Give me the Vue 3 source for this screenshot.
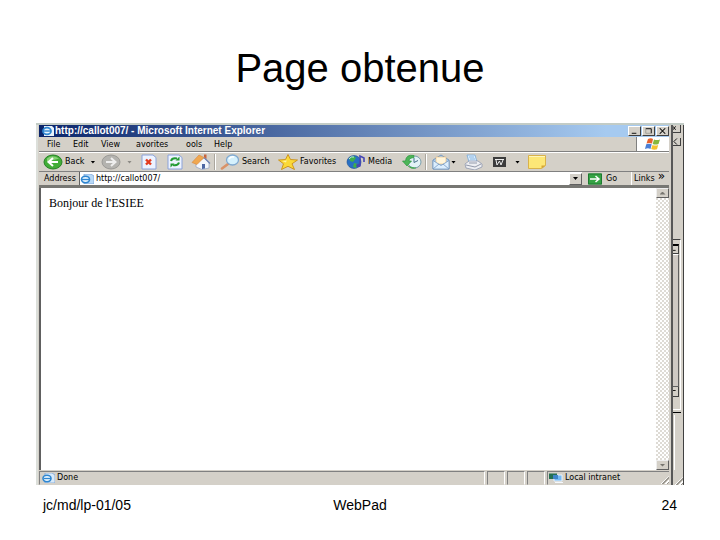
<script setup>
import { ref } from 'vue'

const menus = [
  { name: 'file', label: 'File' },
  { name: 'edit', label: 'Edit' },
  { name: 'view', label: 'View' },
  { name: 'favorites', label: 'avorites' },
  { name: 'tools', label: 'ools' },
  { name: 'help', label: 'Help' },
]

const address = ref('http://callot007/')
</script>

<template>
  <main class="slide">
    <h1>Page obtenue</h1>

    <div class="desktop">
      <section class="window">
        <header class="titlebar">
          <svg class="page-icon" viewBox="0 0 14 10">
            <path d="M3 0h8l2 2v8H3z" fill="#e8f3fc" />
            <ellipse cx="6" cy="5" rx="4" ry="3.4" fill="none" stroke="#2f86d0" stroke-width="1.8" />
            <path d="M3 5h7" stroke="#2f86d0" stroke-width="1.4" />
          </svg>
          <span class="title">http://callot007/ - Microsoft Internet Explorer</span>
          <div class="controls">
            <button aria-label="Minimize"><svg viewBox="0 0 12 8"><path d="M3 6.5h5" stroke="#000" /></svg></button>
            <button aria-label="Restore"><svg viewBox="0 0 12 8"><path d="M3 1.5h6v5" fill="none" stroke="#000" /><path d="M3 1.500v5h6" fill="none" stroke="#8b8984" stroke-width=".7" /></svg></button>
            <button aria-label="Close"><svg viewBox="0 0 12 8"><path d="M3 1l6 6M9 1L3 7" stroke="#000" stroke-width="1.1" /></svg></button>
          </div>
        </header>

        <nav class="menubar">
          <button v-for="m in menus" :key="m.name" :class="['menu', m.name]">{{ m.label }}</button>
          <div class="throbber">
            <svg viewBox="0 0 18 12">
              <path d="M4 1q3-1.4 5 0L8 5.500Q5 4.300 2.500 5.500z" fill="#e8622c" />
              <path d="M10 1.500q3 1.200 6 0L14.500 6q-3 1.200-5.800 0z" fill="#86b83c" />
              <path d="M2.200 6.300q3-1.200 5.500 0L6.500 11Q4 9.700 1 11z" fill="#4b7fd6" />
              <path d="M8.500 7q3 1.200 5.700 0L13 11.300q-3 1-5.800-.3z" fill="#f5c22d" />
            </svg>
          </div>
        </nav>

        <div class="toolbar">
          <button class="tool back">
            <svg viewBox="0 0 20 16">
              <ellipse cx="10" cy="8" rx="9" ry="7" fill="#42ad38" stroke="#258324" />
              <path d="M4 4.500Q9 0 16 4.500 10 6 4 8z" fill="#a5df91" opacity=".7" />
              <path d="M15 8H6M10 4L5.500 8l4.500 4" fill="none" stroke="#fff" stroke-width="2" />
            </svg>
            <span>Back</span><i class="caret"></i>
          </button>
          <button class="tool forward" aria-label="Forward">
            <svg viewBox="0 0 20 16">
              <ellipse cx="10" cy="8" rx="9" ry="7" fill="#b4b3af" stroke="#9a9996" />
              <path d="M5 8h9M10 4l4.500 4-4.500 4" fill="none" stroke="#eee" stroke-width="2" />
            </svg>
            <i class="caret dim"></i>
          </button>
          <button class="tool stop" aria-label="Stop">
            <svg viewBox="0 0 20 16">
              <path d="M3 1h11l3 2.500V15H3z" fill="#edf3ff" stroke="#8ba2d9" />
              <path d="M7 5.500l5 5M12 5.500l-5 5" stroke="#e33a1e" stroke-width="2.400" />
            </svg>
          </button>
          <button class="tool refresh" aria-label="Refresh">
            <svg viewBox="0 0 20 16">
              <path d="M3 1h11l3 2.500V15H3z" fill="#edf3ff" stroke="#8ba2d9" />
              <path d="M6 7q1-3.500 6-2.500M14 8.500q-1 3.500-6 2.500" fill="none" stroke="#229a32" stroke-width="2" />
              <path d="M10.500 6.500h4V2.500zM9.500 9.500h-4v4z" fill="#229a32" />
            </svg>
          </button>
          <button class="tool home" aria-label="Home">
            <svg viewBox="0 0 20 16">
              <path d="M5 9l8-5 5 5v5l-7 1.500L5 13z" fill="#f4f7fc" stroke="#8fa0c4" stroke-width=".7" />
              <path d="M1 8.500L8 1l5 2.500L6 10.500z" fill="#f0a850" stroke="#d8873c" stroke-width=".6" />
              <path d="M13 3.500l6 6" stroke="#7084b4" stroke-width="1.200" />
              <path d="M11 10h3v4.500l-3 .5z" fill="#4d67a3" />
              <path d="M13 .5h2.500V5L13 3z" fill="#c8653d" />
            </svg>
          </button>
          <i class="divider"></i>
          <button class="tool search">
            <svg viewBox="0 0 20 16">
              <path d="M8 10l-6 4.500" stroke="#d99267" stroke-width="2.600" stroke-linecap="round" />
              <ellipse cx="12.500" cy="6" rx="6" ry="5" fill="#d5f1fd" stroke="#80a9d0" stroke-width="1.300" />
              <path d="M9 5q2-3 5-2" fill="none" stroke="#fff" stroke-width="1.400" />
            </svg>
            <span>Search</span>
          </button>
          <button class="tool star">
            <svg viewBox="0 0 20 16">
              <path d="M10 .5l2.500 5 7 .5-5.500 3.800 2.500 5.700L10 12.300 3.500 15.500l2-5.700L.5 6l7-.5z" fill="#fbd936" stroke="#c98f18" stroke-width=".9" />
              <path d="M10 2.500L8.500 6.500 4 7l4 1.500z" fill="#fff4a2" />
            </svg>
            <span>Favorites</span>
          </button>
          <button class="tool media">
            <svg viewBox="0 0 20 16">
              <ellipse cx="8" cy="8" rx="7" ry="6.500" fill="#286fc4" stroke="#174e90" stroke-width=".6" />
              <path d="M3 4q5-3.500 7 0L7 8 4 7zM8 9l4 1-2 4-3-1z" fill="#3fae4c" />
              <path d="M3 5q2-3 5-2" stroke="#bdeee0" fill="none" />
              <path d="M14 11V2l4 2v4" fill="none" stroke="#4747b4" stroke-width="1.600" />
              <ellipse cx="12.500" cy="11.500" rx="2.400" ry="1.800" fill="#4747b4" />
            </svg>
            <span>Media</span>
          </button>
          <button class="tool history" aria-label="History">
            <svg viewBox="0 0 20 16">
              <ellipse cx="12.500" cy="8" rx="6.500" ry="6" fill="#e2f2f7" stroke="#7b9fae" />
              <path d="M12 4v4.500l4-2" fill="none" stroke="#46708b" />
              <path d="M12 1.500Q4 0 3.500 7H.5L5 12l4.500-5H7q0-3 5-3.500zM6 12q3 3.500 8 2" fill="#4db558" stroke="#2d9641" stroke-width=".7" />
            </svg>
          </button>
          <i class="divider"></i>
          <button class="tool mail" aria-label="Mail">
            <svg viewBox="0 0 20 16">
              <path d="M2 6l8-5 8 5v9H2z" fill="#a9cdf0" stroke="#7799c0" />
              <path d="M5 3h10v7H5z" fill="#fff5db" stroke="#e5b777" stroke-width=".6" />
              <path d="M2 6.500l8 5 8-5V15H2z" fill="#dceefe" stroke="#7799c0" stroke-width=".8" />
              <path d="M2 15l6-5M18 15l-6-5" stroke="#7799c0" stroke-width=".8" />
            </svg>
            <i class="caret"></i>
          </button>
          <button class="tool print" aria-label="Print">
            <svg viewBox="0 0 20 16">
              <path d="M4 1h8l2 7H6z" fill="#d9edff" stroke="#79a8d6" stroke-width=".8" />
              <path d="M2 10l4-3h9l4 3v3l-7 3-9-2z" fill="#edeef2" stroke="#8f98ad" stroke-width=".8" />
              <path d="M6 3h5M7 5h5" stroke="#79a8d6" stroke-width=".8" />
              <path d="M3 11l9 2 6-3M6 9h8" fill="none" stroke="#9299aa" />
            </svg>
          </button>
          <button class="tool editor" aria-label="Edit">
            <svg viewBox="0 0 20 16">
              <path d="M4 3h13v10H4z" fill="#3c3c3c" />
              <path d="M6 5.500h9M7 6l1 5 2.500-4 1.500 4 2-5" fill="none" stroke="#eee" />
            </svg>
            <i class="caret"></i>
          </button>
          <button class="tool" aria-label="Discuss">
            <svg viewBox="0 0 20 16">
              <path d="M1.500 1.500h17v10l-4 3h-13z" fill="#fde777" stroke="#d9b24a" />
              <path d="M18.500 11.500h-4v3z" fill="#d5a536" />
              <path d="M2 2.500h16" stroke="#fff6bb" />
            </svg>
          </button>
        </div>

        <form class="addressbar" @submit.prevent>
          <label for="address">Address</label>
          <div class="combo">
            <svg class="page-icon" viewBox="0 0 14 10">
              <path d="M4 0h7l3 2v8H4z" fill="#b8d9f7" stroke="#729bd0" stroke-width=".7" />
              <ellipse cx="5.500" cy="5.500" rx="4" ry="3.200" fill="#e8f6ff" stroke="#2f86d0" stroke-width="1.600" />
              <path d="M2 5.500h7" stroke="#2f86d0" stroke-width="1.300" />
            </svg>
            <input id="address" v-model="address" type="text" spellcheck="false" />
            <button type="button" class="drop" aria-label="Show addresses"><i class="caret"></i></button>
          </div>
          <button class="go">
            <svg viewBox="0 0 14 12">
              <path d="M0 .5h14v11H0z" fill="#35a344" />
              <path d="M.5 1h13v10H.5z" fill="none" stroke="#1e7930" />
              <path d="M2 6h9M7.500 3l3.500 3-3.500 3" fill="none" stroke="#fff" stroke-width="1.500" />
            </svg>
            <span>Go</span>
          </button>
          <button type="button" class="links"><span>Links</span><span class="more">»</span></button>
        </form>

        <div class="viewport">
          <p>Bonjour de l'ESIEE</p>
          <div class="scrollbar">
            <button aria-label="Scroll up"><i class="arrow up"></i></button>
            <button aria-label="Scroll down"><i class="arrow"></i></button>
          </div>
        </div>

        <footer class="status">
          <div class="panel done">
            <svg class="page-icon" viewBox="0 0 14 10">
              <path d="M4 0h7l3 2v8H4z" fill="#d8eafa" stroke="#729bd0" stroke-width=".7" />
              <ellipse cx="6" cy="5.500" rx="4" ry="3.200" fill="#e8f6ff" stroke="#2f86d0" stroke-width="1.600" />
              <path d="M3 5.500h7" stroke="#2f86d0" stroke-width="1.300" />
            </svg>
            <span>Done</span>
          </div>
          <div class="panel small"></div>
          <div class="panel small"></div>
          <div class="panel small"></div>
          <div class="panel zone">
            <svg class="page-icon" viewBox="0 0 14 10">
              <path d="M5 2h8v6H5z" fill="#75b9f3" stroke="#e8f2fb" />
              <path d="M6 9.500h8" stroke="#f5f8fc" />
              <path d="M0 .5h8v5.500H0z" fill="#247052" />
              <path d="M4 2h5v4H4z" fill="#3f85c9" />
            </svg>
            <span>Local intranet</span>
            <i class="grip"></i>
          </div>
        </footer>
      </section>

      <aside class="behind">
        <div class="stub"><svg viewBox="0 0 8 7"><path d="M0 1l3 4M3 1L0 5" stroke="#000" /></svg></div>
        <div class="stub"><svg viewBox="0 0 8 7"><path d="M4.500 0L1 3.500 4.500 7" fill="none" stroke="#000" /></svg></div>
        <div class="frame">
          <div class="stub"><svg viewBox="0 0 8 7"><path d="M0 4.500h3" stroke="#000" /></svg></div>
          <div class="track"></div>
          <div class="stub"><svg viewBox="0 0 8 7"><path d="M0 3.500h3" stroke="#000" /></svg></div>
        </div>
        <div class="tail"></div>
        <i class="grip"></i>
      </aside>
    </div>

    <footer class="footer">
      <span>jc/md/lp-01/05</span>
      <span>WebPad</span>
      <span>24</span>
    </footer>
  </main>
</template>

<style>
body {
  background: #fff;
}
</style>

<style scoped>
* {
  box-sizing: border-box;
}

.slide {
  display: flex;
  flex-direction: column;
  min-height: 100vh;
  padding: 44px 36px 0;
  color: #000;
  font-family: "Liberation Sans", Arial, sans-serif;
}

h1 {
  margin: 0 0 31px;
  font-size: 40px;
  line-height: 48px;
  font-weight: 400;
  text-align: center;
}

button {
  display: flex;
  align-items: center;
  margin: 0;
  padding: 0;
  border: 0;
  background: none;
  color: inherit;
  font: inherit;
}

svg {
  display: block;
  flex: none;
}

.desktop {
  flex: 1;
  display: flex;
  border-top: 2px solid #c3ccc6;
  font-family: "DejaVu Sans", sans-serif;
  font-size: 8px;
  line-height: 12px;
}

.window {
  flex: 1;
  display: flex;
  flex-direction: column;
  min-width: 0;
  padding: 0 2px 0 1px;
  border-left: 2px solid #dcdfda;
  border-right: 2px solid #585858;
  background: #d4d0c8;
}

/* Title bar */
.titlebar {
  display: flex;
  align-items: center;
  height: 12px;
  padding-left: 2px;
  background: linear-gradient(90deg, #0a246a, #a6caf0 90%);
  color: #fff;
}

.page-icon {
  width: 14px;
  height: 10px;
}

.title {
  flex: 1;
  font-family: "Liberation Sans", Arial, sans-serif;
  font-size: 10px;
  font-weight: 700;
  white-space: nowrap;
}

.controls {
  display: flex;
  gap: 1px;
}

.controls button {
  width: 13px;
  height: 10px;
  border: 1px solid;
  border-color: #fff #404040 #404040 #fff;
  background: #d4d0c8;
}

.controls svg {
  width: 11px;
  height: 8px;
}

/* Menu bar */
.menubar {
  display: flex;
  height: 15px;
  border-bottom: 1px solid #808080;
}

.menu {
  width: 28px;
  padding-top: 2px;
}

.menu.file {
  width: 34px;
  padding-left: 8px;
}

.menu.view {
  width: 35px;
}

.menu.favorites {
  width: 50px;
}

.throbber {
  display: flex;
  align-items: center;
  justify-content: center;
  width: 33px;
  margin-left: auto;
  border-left: 1px solid #808080;
  background: #fff;
}

.throbber svg {
  width: 18px;
  height: 12px;
}

/* Toolbar */
.toolbar {
  display: flex;
  align-items: center;
  height: 20px;
  padding-left: 4px;
  border-top: 1px solid #fff;
  border-bottom: 1px solid #808080;
}

.tool {
  flex: none;
  gap: 2px;
  width: 26px;
  height: 18px;
}

.tool svg {
  width: 20px;
  height: 16px;
}

.caret {
  width: 5px;
  height: 3px;
  background: #000;
  clip-path: polygon(0 0, 100% 0, 50% 100%);
}

.caret.dim {
  background: #8c8a85;
}

.back {
  width: 58px;
}

.back .caret,
.forward .caret {
  margin-left: 4px;
}

.forward {
  width: 38px;
}

.home,
.history {
  width: 22px;
}

.search {
  width: 58px;
}

.star {
  width: 68px;
}

.media {
  width: 56px;
}

.mail {
  gap: 0;
  width: 32px;
}

.editor {
  gap: 6px;
  width: 38px;
}

.divider {
  width: 2px;
  height: 16px;
  margin: 0 4px 0 1px;
  border-left: 1px solid #aaa69e;
  background: #fff;
}

/* Address bar */
.addressbar {
  display: flex;
  height: 16px;
  padding-left: 5px;
  border-bottom: 3px solid #777773;
}

.addressbar label {
  width: 35px;
  line-height: 14px;
}

.combo {
  flex: 1;
  display: flex;
  align-items: center;
  border-left: 1px solid #606060;
  background: #fff;
}

.combo input {
  flex: 1;
  min-width: 0;
  height: 12px;
  padding: 1px 2px 0;
  border: 0;
  outline: 0;
  background: none;
  color: #000;
  font: inherit;
}

.drop {
  justify-content: center;
  width: 13px;
  height: 12px;
  border: 1px solid;
  border-color: #fff #606060 #606060 #fff;
  background: #d4d0c8;
}

.go {
  gap: 4px;
  width: 49px;
  padding-left: 6px;
}

.go svg {
  width: 14px;
  height: 12px;
}

.links {
  justify-content: space-between;
  width: 38px;
  padding: 0 4px 0 2px;
  border-left: 1px solid #fff;
}

.more {
  align-self: flex-start;
  font-size: 12px;
  line-height: 8px;
}

/* Page area */
.viewport {
  flex: 1;
  display: flex;
  justify-content: space-between;
  border-left: 2px solid #606060;
  background: #fff;
}

.viewport p {
  margin: 8px;
  font-family: "Liberation Serif", "Times New Roman", serif;
  font-size: 12px;
  line-height: 14px;
}

.scrollbar {
  display: flex;
  flex-direction: column;
  justify-content: space-between;
  width: 13px;
  background: conic-gradient(#dedbd5 25%, #fff 0 50%, #dedbd5 0 75%, #fff 0) 0 0 / 4px 4px;
}

.scrollbar button {
  justify-content: center;
  height: 10px;
  border: 1px solid;
  border-color: #eee #606060 #606060 #eee;
  background: #d4d0c8;
}

.arrow {
  width: 6px;
  height: 3px;
  background: #77756f;
  clip-path: polygon(0 0, 100% 0, 50% 100%);
}

.arrow.up {
  clip-path: polygon(50% 0, 100% 100%, 0 100%);
}

/* Status bar */
.status {
  display: flex;
  gap: 2px;
  height: 15px;
  padding-top: 1px;
}

.panel {
  display: flex;
  align-items: center;
  gap: 2px;
  border: 1px solid;
  border-color: #808080 #fff #d4d0c8 #808080;
}

.done {
  flex: 1;
  padding-left: 1px;
}

.small {
  width: 18px;
}

.zone {
  width: 122px;
  padding-left: 1px;
  border-right: 0;
}

.grip {
  width: 9px;
  height: 8px;
  margin-left: auto;
  align-self: flex-end;
  background: repeating-linear-gradient(135deg, #fff 0 1px, #9a978f 1px 2px, #d4d0c8 2px 3px);
  clip-path: polygon(100% 0, 100% 100%, 0 100%);
}

/* Sliver of the window underneath */
.behind {
  display: flex;
  flex-direction: column;
  width: 11px;
  border-right: 1px solid #404040;
  background: #d4d0c8;
}

.stub {
  width: 8px;
  height: 8px;
  margin-bottom: 5px;
  border-right: 1px solid #404040;
  border-bottom: 1px solid #404040;
}

.stub svg {
  width: 7px;
  height: 7px;
}

.frame {
  flex: 1;
  display: flex;
  flex-direction: column;
  width: 8px;
  margin-top: 88px;
  padding-bottom: 12px;
  border-top: 1px solid #404040;
  border-right: 1px solid #fff;
  border-bottom: 1px solid #fff;
}

.frame .stub {
  flex: none;
  width: 6px;
  height: 10px;
  margin: 0;
}

.frame .stub:first-child {
  margin-top: 4px;
  border-top: 2px solid #000;
}

.track {
  flex: 1;
  width: 6px;
  border-top: 1px solid #fff;
  border-right: 1px solid #606060;
  border-bottom: 1px solid #606060;
  background: #cfcac4;
}

.tail {
  width: 8px;
  height: 65px;
  margin-top: 2px;
  border-top: 1px solid #000;
  background: linear-gradient(#fff, #fff) 1px 2px / 1px 55px no-repeat;
}

/* Slide footer */
.footer {
  display: grid;
  grid-template-columns: 1fr 1fr 1fr;
  height: 55px;
  padding: 11px 7px 0;
  font-size: 14px;
  line-height: 18px;
}

.footer span:nth-child(2) {
  text-align: center;
}

.footer span:last-child {
  text-align: right;
}
</style>
